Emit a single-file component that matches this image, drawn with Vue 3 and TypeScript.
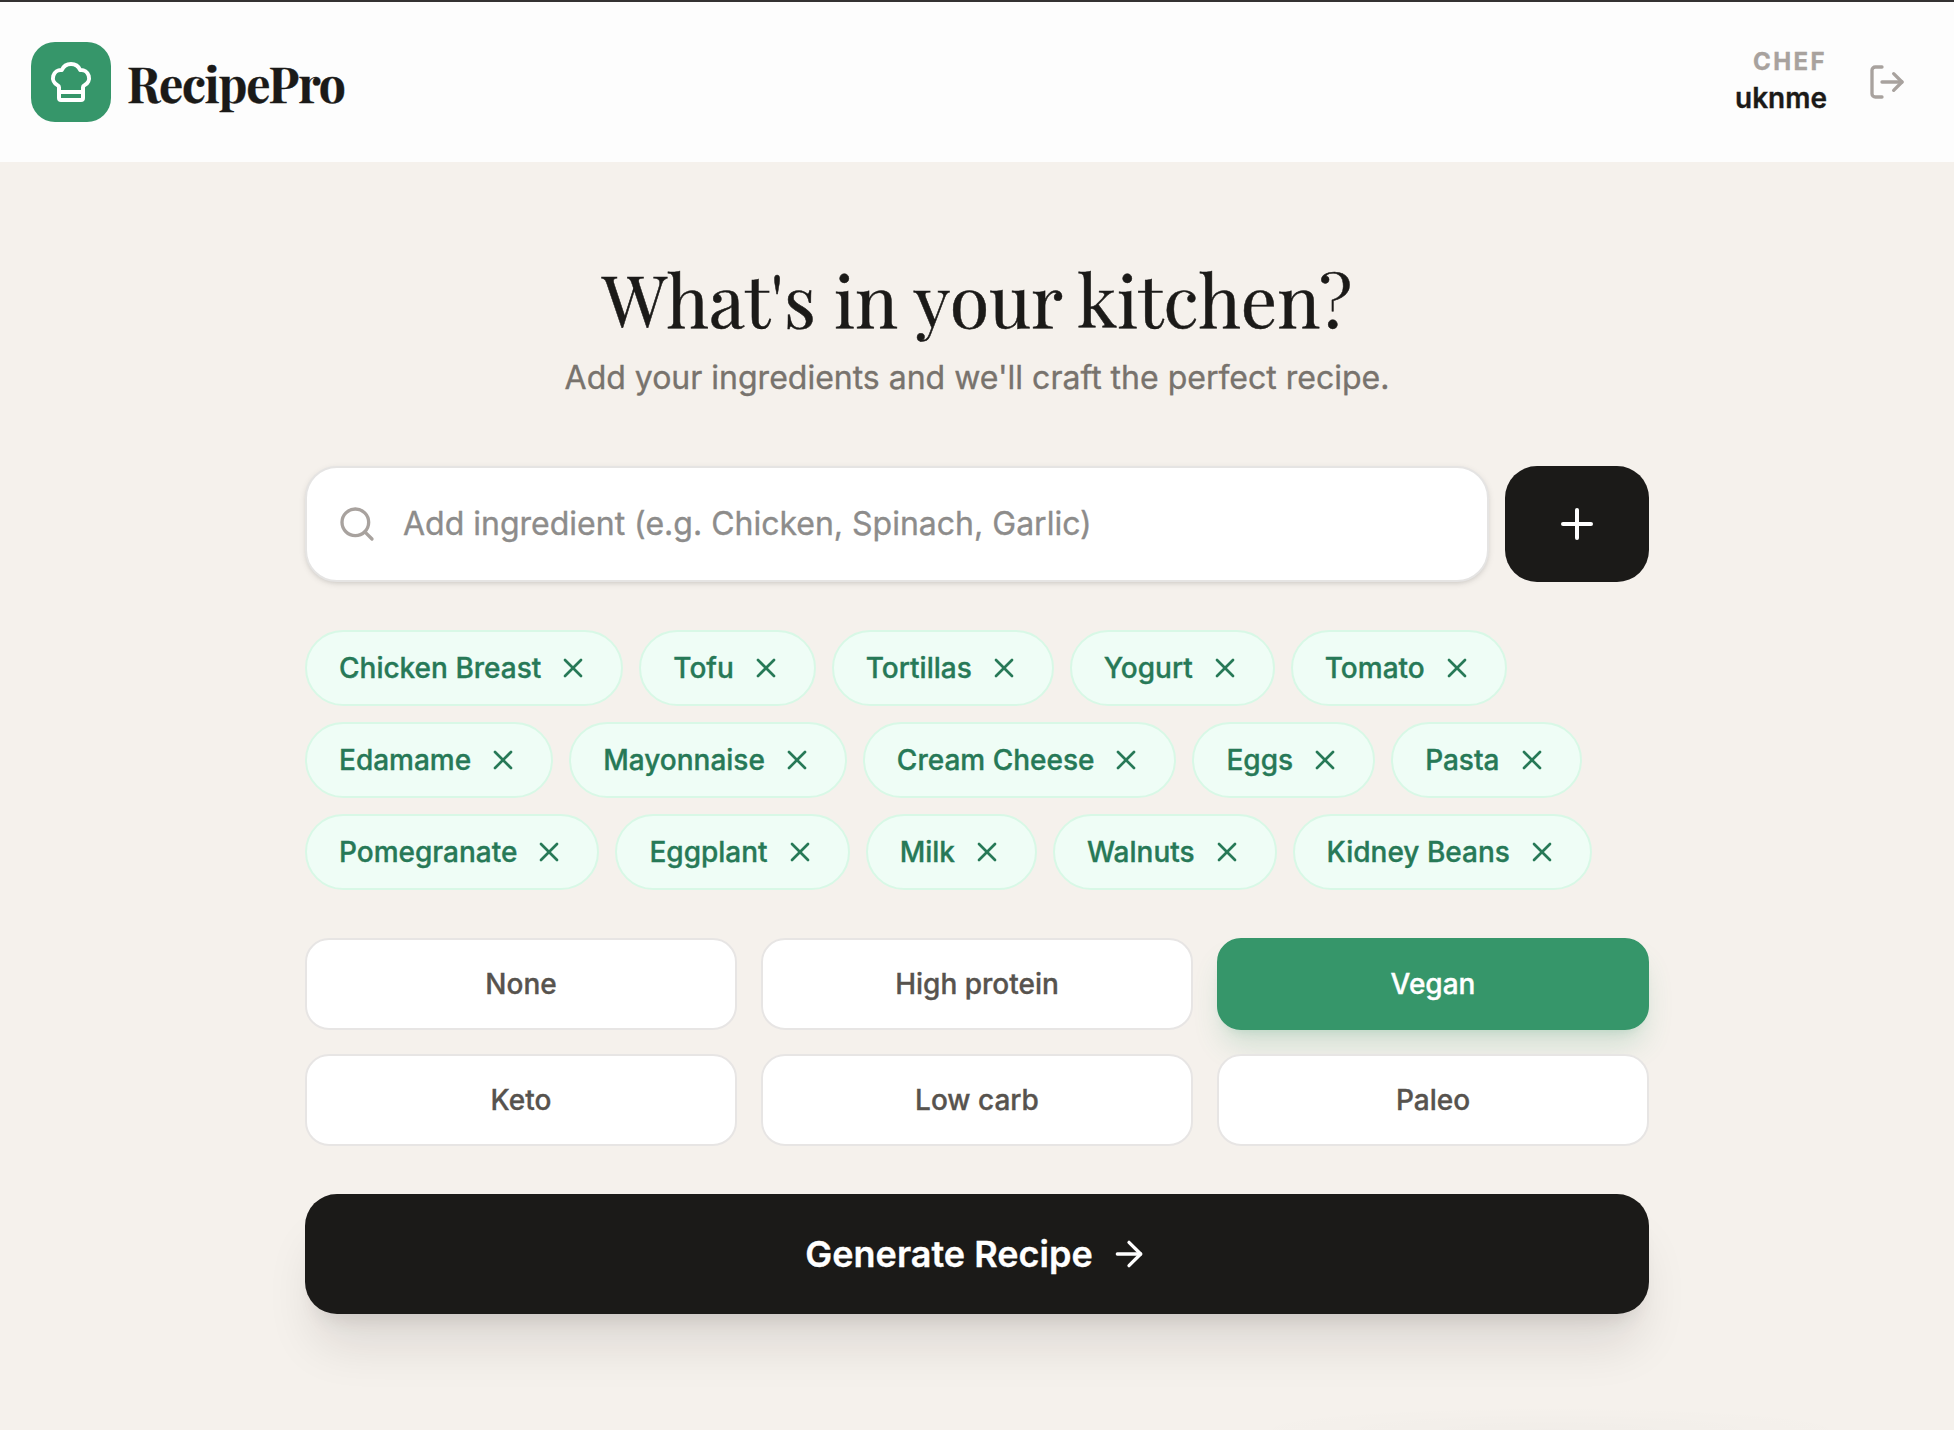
<template>
  <div class="page">
    <header class="header">
      <div class="brand">
        <div class="brand-mark">
          <svg class="icon" width="48" height="48" viewBox="0 0 24 24">
            <path d="M17 21a1 1 0 0 0 1-1v-5.35c0-.457.316-.844.727-1.041a4 4 0 0 0-2.134-7.589 5 5 0 0 0-9.186 0 4 4 0 0 0-2.134 7.588c.411.198.727.585.727 1.041V20a1 1 0 0 0 1 1Z" />
            <path d="M6 17h12" />
          </svg>
        </div>
        <span class="brand-name">RecipePro</span>
      </div>

      <div class="account">
        <div class="account-text">
          <span class="account-role">CHEF</span>
          <span class="account-name">{{ username }}</span>
        </div>
        <button class="logout" type="button" aria-label="Log out">
          <svg class="icon" width="40" height="40" viewBox="0 0 24 24">
            <path d="m16 17 5-5-5-5" />
            <path d="M21 12H9" />
            <path d="M9 21H5a2 2 0 0 1-2-2V5a2 2 0 0 1 2-2h4" />
          </svg>
        </button>
      </div>
    </header>

    <main class="main">
      <h1 class="title">What's in your kitchen?</h1>
      <p class="subtitle">Add your ingredients and we'll craft the perfect recipe.</p>

      <form class="add-row" @submit.prevent="addIngredient">
        <label class="field">
          <svg class="icon field-icon" width="40" height="40" viewBox="0 0 24 24">
            <circle cx="11" cy="11" r="8" />
            <path d="m21 21-4.3-4.3" />
          </svg>
          <input
            v-model="draft"
            class="field-input"
            type="text"
            placeholder="Add ingredient (e.g. Chicken, Spinach, Garlic)"
          />
        </label>
        <button class="add-button" type="submit" aria-label="Add">
          <svg class="icon" width="48" height="48" viewBox="0 0 24 24">
            <path d="M5 12h14" />
            <path d="M12 5v14" />
          </svg>
        </button>
      </form>

      <div class="chips">
        <span v-for="(item, i) in ingredients" :key="item" class="chip">
          {{ item }}
          <button class="chip-remove" type="button" aria-label="Remove" @click="removeIngredient(i)">
            <svg class="icon" width="32" height="32" viewBox="0 0 24 24">
              <path d="M18 6 6 18" />
              <path d="m6 6 12 12" />
            </svg>
          </button>
        </span>
      </div>

      <div class="diets">
        <button
          v-for="diet in diets"
          :key="diet"
          class="diet"
          :class="{ 'is-active': diet === selectedDiet }"
          type="button"
          @click="selectedDiet = diet"
        >
          {{ diet }}
        </button>
      </div>

      <button class="generate" type="button">
        <span>Generate Recipe</span>
        <svg class="icon" width="40" height="40" viewBox="0 0 24 24">
          <path d="M5 12h14" />
          <path d="m12 5 7 7-7 7" />
        </svg>
      </button>
    </main>
  </div>
</template>

<script setup lang="ts">
import { ref } from 'vue'

const username = 'uknme'

const diets = ['None', 'High protein', 'Vegan', 'Keto', 'Low carb', 'Paleo']
const selectedDiet = ref('Vegan')

const draft = ref('')
const ingredients = ref<string[]>([
  'Chicken Breast',
  'Tofu',
  'Tortillas',
  'Yogurt',
  'Tomato',
  'Edamame',
  'Mayonnaise',
  'Cream Cheese',
  'Eggs',
  'Pasta',
  'Pomegranate',
  'Eggplant',
  'Milk',
  'Walnuts',
  'Kidney Beans',
])

function addIngredient() {
  const name = draft.value.trim()
  if (name && !ingredients.value.includes(name)) ingredients.value.push(name)
  draft.value = ''
}

function removeIngredient(index: number) {
  ingredients.value.splice(index, 1)
}
</script>

<style>
body {
  margin: 0;
  background: #f5f1ec;
}
</style>

<style scoped>
.page {
  box-sizing: border-box;
  height: 1430px;
  overflow: hidden;
  border-top: 2px solid #343232;
  /* faint shade rising from the bottom edge */
  background: radial-gradient(320px 24px at 1550px 100%, rgba(0, 0, 0, 0.015), transparent) #f5f1ec;
  color: #1b1a18;
  font-family: Inter, "Liberation Sans", sans-serif;
  -webkit-font-smoothing: antialiased;
  -webkit-text-stroke: 0.35px currentColor;
}

button {
  padding: 0;
  border: 0;
  background: none;
  color: inherit;
  font: inherit;
  cursor: pointer;
}

.icon {
  display: block;
  flex: none;
  fill: none;
  stroke: currentColor;
  stroke-width: 2;
  stroke-linecap: round;
  stroke-linejoin: round;
}

.header {
  box-sizing: border-box;
  display: flex;
  align-items: center;
  justify-content: space-between;
  height: 160px;
  padding: 0 31px;
  background: #fdfdfd;
}

.brand {
  display: flex;
  align-items: center;
  gap: 16px;
}

.brand-mark {
  display: flex;
  align-items: center;
  justify-content: center;
  width: 80px;
  height: 80px;
  border-radius: 24px;
  background: #36966a;
  color: #fff;
}

.brand-name {
  padding-top: 2px;
  font-family: "Playfair Display", "Liberation Serif", serif;
  font-size: 48px;
  font-weight: 700;
  line-height: 64px;
  letter-spacing: -1.2px;
}

.account {
  display: flex;
  align-items: center;
  gap: 24px;
}

.account-text {
  display: flex;
  flex-direction: column;
  align-items: flex-end;
}

.account-role {
  color: #a8a29e;
  font-size: 24px;
  font-weight: 700;
  line-height: 32px;
  letter-spacing: 2.4px;
}

.account-name {
  font-size: 28px;
  font-weight: 600;
  line-height: 40px;
}

.logout {
  padding: 16px;
  color: #a8a29e;
}

.main {
  width: 1344px;
  margin: 0 auto;
  padding-top: 96px;
}

.title {
  margin: 0;
  font-family: "Playfair Display", "Liberation Serif", serif;
  font-size: 72px;
  font-weight: 400;
  line-height: 80px;
  text-align: center;
  -webkit-text-stroke-width: 0.5px;
}

.subtitle {
  margin: 16px 0 64px;
  color: #78736d;
  font-size: 32px;
  line-height: 48px;
  text-align: center;
}

.add-row {
  display: flex;
  gap: 16px;
  height: 116px;
}

.field {
  box-sizing: border-box;
  display: flex;
  flex: 1;
  align-items: center;
  gap: 26px;
  padding: 0 30px;
  border: 2px solid #e5e4e3;
  border-radius: 32px;
  background: #fff;
  box-shadow: 0 2px 6px rgba(0, 0, 0, 0.1), 0 2px 4px -2px rgba(0, 0, 0, 0.1);
}

.field-icon {
  color: #a8a29e;
}

.field-input {
  flex: 1;
  min-width: 0;
  padding: 0;
  border: 0;
  outline: 0;
  background: none;
  color: inherit;
  font: inherit;
  font-size: 32px;
  line-height: 48px;
}

.field-input::placeholder {
  color: #8d8c8b;
  opacity: 1;
  -webkit-text-stroke: 0.35px #8d8c8b;
}

.add-button {
  display: flex;
  align-items: center;
  justify-content: center;
  width: 144px;
  border-radius: 32px;
  background: #1b1a18;
  color: #fff;
}

.chips {
  display: flex;
  flex-wrap: wrap;
  gap: 16px;
  margin-top: 48px;
}

.chip {
  display: flex;
  align-items: center;
  gap: 16px;
  padding: 16px 32px;
  border: 2px solid #d8f8e6;
  border-radius: 38px;
  background: #effdf6;
  color: #277957;
  font-size: 28px;
  font-weight: 500;
  line-height: 40px;
}

.diets {
  display: grid;
  grid-template-columns: repeat(3, 1fr);
  gap: 24px;
  margin-top: 48px;
}

.diet {
  height: 92px;
  border: 2px solid #e7e5e4;
  border-radius: 24px;
  background: #fff;
  color: #57534e;
  font-size: 28px;
  font-weight: 500;
}

.diet.is-active {
  border-color: #36966a;
  background: #36966a;
  color: #fff;
  box-shadow: 0 20px 30px -6px rgba(54, 150, 106, 0.2), 0 8px 12px -8px rgba(54, 150, 106, 0.2);
}

.generate {
  display: flex;
  align-items: center;
  justify-content: center;
  gap: 16px;
  width: 100%;
  height: 120px;
  margin-top: 48px;
  border-radius: 32px;
  background: #1b1a18;
  color: #fff;
  font-size: 36px;
  font-weight: 600;
  box-shadow: 0 40px 50px -10px rgba(28, 22, 22, 0.11), 0 16px 20px -12px rgba(28, 22, 22, 0.11);
}

.account-role,
.subtitle,
.chip,
.diet,
.generate {
  -webkit-text-stroke-color: currentColor;
}
</style>
